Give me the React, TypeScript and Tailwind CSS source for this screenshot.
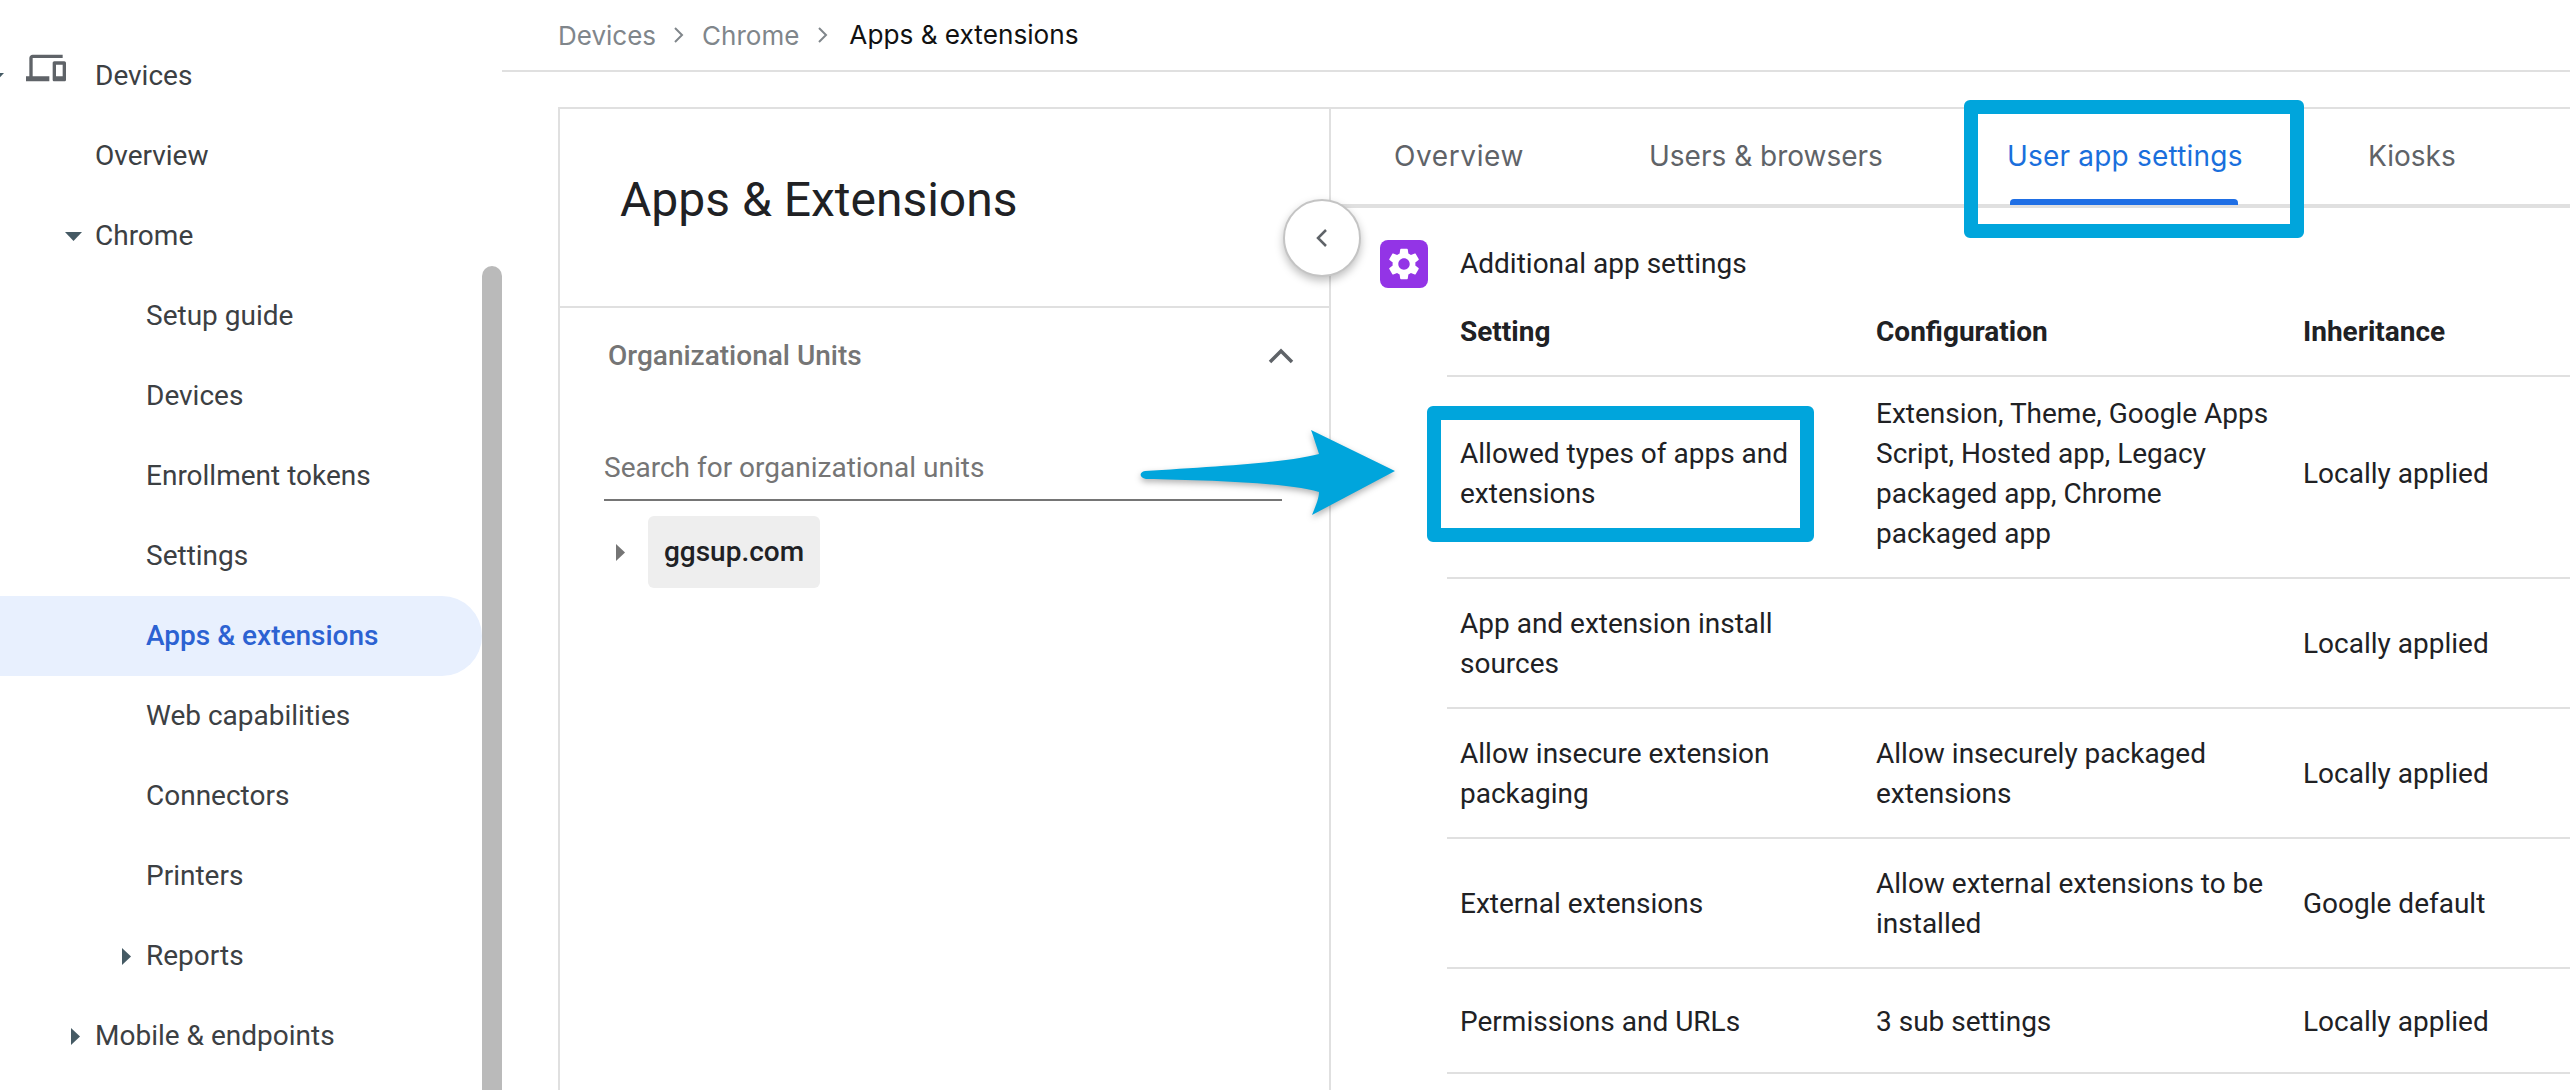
const NAV_ITEMS: { label: string; indent: 'root' | 'sub'; caret?: 'down' | 'right'; active?: boolean }[] = [
  { label: 'Overview', indent: 'root' },
  { label: 'Chrome', indent: 'root', caret: 'down' },
  { label: 'Setup guide', indent: 'sub' },
  { label: 'Devices', indent: 'sub' },
  { label: 'Enrollment tokens', indent: 'sub' },
  { label: 'Settings', indent: 'sub' },
  { label: 'Apps & extensions', indent: 'sub', active: true },
  { label: 'Web capabilities', indent: 'sub' },
  { label: 'Connectors', indent: 'sub' },
  { label: 'Printers', indent: 'sub' },
  { label: 'Reports', indent: 'sub', caret: 'right' },
  { label: 'Mobile & endpoints', indent: 'root', caret: 'right' }
]

const ROWS: { setting: string; config: string; inherit: string; height: string }[] = [
  {
    setting: 'Allowed types of apps and extensions',
    config: 'Extension, Theme, Google Apps Script, Hosted app, Legacy packaged app, Chrome packaged app',
    inherit: 'Locally applied',
    height: 'h-[202px] pb-[6px]'
  },
  { setting: 'App and extension install sources', config: '', inherit: 'Locally applied', height: 'h-[130px] pt-[2px]' },
  {
    setting: 'Allow insecure extension packaging',
    config: 'Allow insecurely packaged extensions',
    inherit: 'Locally applied',
    height: 'h-[130px] pt-[2px]'
  },
  {
    setting: 'External extensions',
    config: 'Allow external extensions to be installed',
    inherit: 'Google default',
    height: 'h-[130px] pt-[2px]'
  },
  { setting: 'Permissions and URLs', config: '3 sub settings', inherit: 'Locally applied', height: 'h-[105px] pt-[2px]' }
]

function CaretDown() {
  return (
    <svg width="17" height="9" viewBox="0 0 17 9" className="fill-[#455a64]">
      <path d="M0 0h17L8.5 9z" />
    </svg>
  )
}

function CaretRight({ color = 'fill-[#455a64]' }: { color?: string }) {
  return (
    <svg width="9" height="17" viewBox="0 0 9 17" className={color}>
      <path d="M0 0l9 8.5L0 17z" />
    </svg>
  )
}

function Sidebar() {
  return (
    <div className="flex w-[502px] shrink-0">
      <nav className="w-[482px] pt-[36px] text-[28px] text-[#3c4043]">
        <div className="relative flex h-[80px] items-center pl-[95px]">
          <span className="absolute left-[-13px] top-[37px]">
            <CaretDown />
          </span>
          <svg width="40" height="40" viewBox="0 0 24 24" className="absolute left-[26px] top-[12px] fill-[#5f6368]">
            <path d="M4 6h18V4H4c-1.1 0-2 .9-2 2v11H0v3h14v-3H4V6zm19 2h-6c-.55 0-1 .45-1 1v10c0 .55.45 1 1 1h6c.55 0 1-.45 1-1V9c0-.55-.45-1-1-1zm-1 9h-4v-7h4v7z" />
          </svg>
          Devices
        </div>
        {NAV_ITEMS.map((item) => (
          <div
            key={item.label}
            className={`flex h-[80px] items-center ${item.indent === 'root' ? 'pl-[95px]' : 'pl-[146px]'} ${
              item.active ? 'rounded-r-[40px] bg-[#e8f0fe] font-medium text-[#2c62d2]' : ''
            }`}
          >
            {item.caret && (
              <span className={`flex ${item.caret === 'down' ? 'ml-[-30px] w-[30px]' : 'ml-[-24px] w-[24px]'}`}>
                {item.caret === 'down' ? <CaretDown /> : <CaretRight />}
              </span>
            )}
            {item.label}
          </div>
        ))}
      </nav>
      <div className="w-[20px] pt-[266px]">
        <div className="h-[900px] rounded-t-[10px] bg-[#bababa]" />
      </div>
    </div>
  )
}

function Breadcrumb() {
  return (
    <div className="flex h-[72px] items-center border-b-2 border-[#e0e0e0] pl-[56px] font-['Inter',sans-serif] text-[26px]">
      <span className="text-[#80868b]">Devices</span>
      <svg width="14" height="24" viewBox="0 0 14 24" className="mx-[16px] fill-none stroke-[#80868b] stroke-[2]">
        <path d="M3 5l7 7-7 7" />
      </svg>
      <span className="text-[#80868b]">Chrome</span>
      <svg width="14" height="24" viewBox="0 0 14 24" className="ml-[17px] mr-[19px] fill-none stroke-[#80868b] stroke-[2]">
        <path d="M3 5l7 7-7 7" />
      </svg>
      <span className="text-[26.2px] text-[#111111]">Apps &amp; extensions</span>
    </div>
  )
}

function LeftPanel() {
  return (
    <div className="h-full w-[773px] shrink-0 border-x-2 border-[#e0e0e0]">
      <div className="flex h-[199px] items-center border-b-2 border-[#e0e0e0] pl-[60px] pb-[16px] text-[48px] text-[#202124]">
        Apps &amp; Extensions
      </div>
      <div className="flex h-[98px] items-center justify-between pb-[2px] pl-[48px] pr-[34px] text-[28px] font-medium text-[#757575]">
        Organizational Units
        <svg width="28" height="18" viewBox="0 0 28 18" className="fill-none stroke-[#5f6368] stroke-[3.5]">
          <path d="M3 15L14 4l11 11" />
        </svg>
      </div>
      <div className="ml-[44px] mr-[47px] mt-[31px] flex h-[64px] items-start border-b-2 border-[#757575] pt-[13px] text-[28px] leading-[36px] text-[#757575]">
        Search for organizational units
      </div>
      <div className="ml-[56px] mt-[15px] flex items-center">
        <CaretRight color="fill-[#757575]" />
        <div className="ml-[23px] flex h-[72px] w-[172px] items-center justify-center rounded-[6px] bg-[#eeeeee] text-[28px] font-medium text-[#202124]">
          ggsup.com
        </div>
      </div>
    </div>
  )
}

function RightPanel() {
  return (
    <div className="min-w-0 flex-1 text-[28px] text-[#202124]">
      <div className="flex h-[99px] items-center border-b-4 border-[#e0e0e0] pb-[2px] pl-[63px] font-['Inter',sans-serif] text-[28px] text-[#5f6368]">
        <span className="w-[255px] tracking-[0.6px]">Overview</span>
        <span className="w-[358px]">Users &amp; browsers</span>
        <span className="relative w-[361px] tracking-[0.2px] text-[#1a6fdc]">
          User app settings
          <span className="absolute left-[3px] top-[64px] h-[6px] w-[228px] rounded-t-[4px] bg-[#1f6fe5]" />
        </span>
        <span>Kiosks</span>
      </div>
      <div className="flex items-center pl-[49px] pt-[32px]">
        <div className="flex h-[48px] w-[48px] items-center justify-center rounded-[8px] bg-[#9334e6]">
          <svg width="38" height="38" viewBox="0 0 24 24" className="fill-white">
            <path d="M19.14 12.94c.04-.3.06-.61.06-.94 0-.32-.02-.64-.07-.94l2.03-1.58c.18-.14.23-.41.12-.61l-1.92-3.32c-.12-.22-.37-.29-.59-.22l-2.39.96c-.5-.38-1.03-.7-1.62-.94l-.36-2.54c-.04-.24-.24-.41-.48-.41h-3.84c-.24 0-.43.17-.47.41l-.36 2.54c-.59.24-1.13.57-1.62.94l-2.39-.96c-.22-.08-.47 0-.59.22L2.74 8.87c-.12.21-.08.47.12.61l2.03 1.58c-.05.3-.09.63-.09.94s.02.64.07.94l-2.03 1.58c-.18.14-.23.41-.12.61l1.92 3.32c.12.22.37.29.59.22l2.39-.96c.5.38 1.03.7 1.62.94l.36 2.54c.05.24.24.41.48.41h3.84c.24 0 .44-.17.47-.41l.36-2.54c.59-.24 1.13-.56 1.62-.94l2.39.96c.22.08.47 0 .59-.22l1.92-3.32c.12-.22.07-.47-.12-.61l-2.01-1.58zM12 15.6c-1.98 0-3.6-1.62-3.6-3.6s1.62-3.6 3.6-3.6 3.6 1.62 3.6 3.6-1.62 3.6-3.6 3.6z" />
          </svg>
        </div>
        <span className="ml-[32px]">Additional app settings</span>
      </div>
      <div className="ml-[116px]">
        <div className="grid h-[89px] grid-cols-[416px_427px_1fr] items-center border-b-2 border-[#e0e0e0] pl-[13px] font-bold">
          <span>Setting</span>
          <span>Configuration</span>
          <span>Inheritance</span>
        </div>
        {ROWS.map((row) => (
          <div
            key={row.setting}
            className={`grid ${row.height} grid-cols-[416px_427px_1fr] items-center border-b-2 border-[#e0e0e0] pl-[13px] leading-[40px]`}
          >
            <span className="pr-[30px]">{row.setting}</span>
            <span className="pr-[30px]">{row.config}</span>
            <span>{row.inherit}</span>
          </div>
        ))}
      </div>
    </div>
  )
}

export default function App() {
  return (
    <div className="relative flex h-[1090px] w-[2570px] overflow-hidden bg-white font-['Roboto',sans-serif]">
      <Sidebar />
      <main className="flex min-w-0 flex-1 flex-col">
        <Breadcrumb />
        <div className="flex-1 pl-[56px] pt-[35px]">
          <div className="flex h-full border-t-2 border-[#e0e0e0]">
            <LeftPanel />
            <RightPanel />
          </div>
        </div>
      </main>

      {/* collapse button */}
      <div className="absolute left-[1283px] top-[199px] flex h-[78px] w-[78px] items-center justify-center rounded-full border-2 border-[#c4c4c4] bg-white shadow-[0_4px_8px_rgba(0,0,0,0.25)]">
        <svg width="18" height="22" viewBox="0 0 18 22" className="fill-none stroke-[#5f6368] stroke-[2.5]">
          <path d="M13 3l-8 8 8 8" />
        </svg>
      </div>

      {/* callouts */}
      <div className="absolute left-[1964px] top-[100px] h-[138px] w-[340px] rounded-[6px] border-[14px] border-[#00a5dc]" />
      <div className="absolute left-[1427px] top-[406px] h-[136px] w-[387px] rounded-[6px] border-[14px] border-[#00a5dc]" />
      <svg width="270" height="100" viewBox="0 0 270 100" className="absolute left-[1136px] top-[425px] drop-shadow-[0_3px_3px_rgba(0,0,0,0.3)]">
        <path
          d="M175 5L259 46L176 90C181 78 183 72 183 67C150 57 60 55 10 54C3 53 3 47 9 46C70 42 150 38 183 29C180 20 178 13 175 5Z"
          fill="#00a5dc"
        />
      </svg>
    </div>
  )
}
